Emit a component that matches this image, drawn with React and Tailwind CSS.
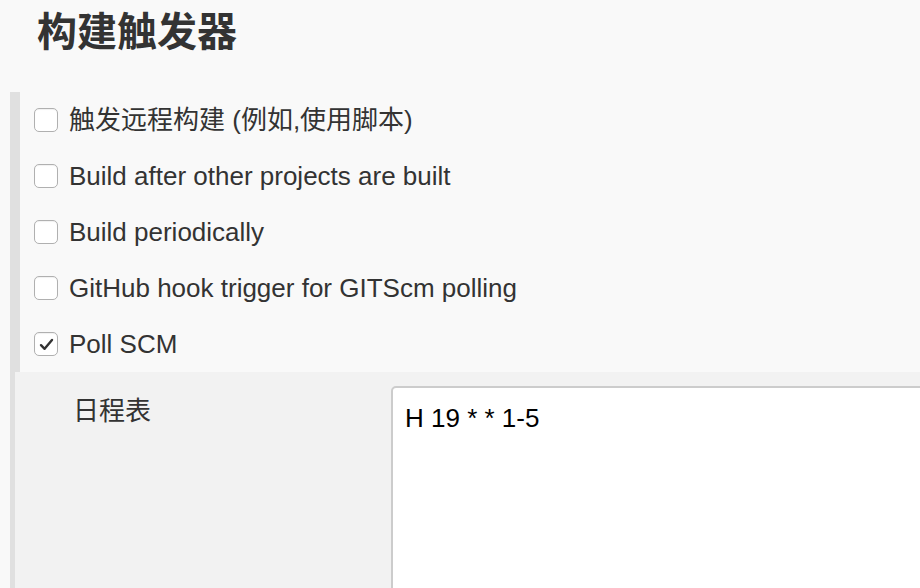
import React from "react";

const font = { fontFamily: '"Liberation Sans", "Noto Sans CJK SC", sans-serif' };

function Box({ checked }) {
  return (
    <span className="flex h-[24px] w-[24px] shrink-0 items-center justify-center rounded-[5px] border border-[#b0b0b0] bg-white shadow-[inset_0_1px_1px_rgba(0,0,0,0.06)]">
      {checked && (
        <svg width="15" height="13" viewBox="0 0 15 13" fill="none">
          <path d="M2 7.2 L5.6 10.8 L13 2" stroke="#333" strokeWidth="2.4" strokeLinecap="round" strokeLinejoin="round" />
        </svg>
      )}
    </span>
  );
}

function Row({ label, checked }) {
  return (
    <label className="flex h-[56px] items-center gap-[11px] pl-[14px] text-[26px] text-[#333]">
      <Box checked={checked} />
      <span className="leading-none">{label}</span>
    </label>
  );
}

export default function App() {
  const rows = [
    "触发远程构建 (例如,使用脚本)",
    "Build after other projects are built",
    "Build periodically",
    "GitHub hook trigger for GITScm polling",
  ];

  return (
    <div className="h-[588px] w-[920px] overflow-hidden bg-[#f9f9f9]" style={font}>
      <h1 className="h-[92px] pl-[37px] pt-[10px] text-[40px] font-bold leading-[44px] text-[#333]">
        构建触发器
      </h1>
      <div className="ml-[10px] h-[496px] border-l-[10px] border-[#e0e0e0]">
        {rows.map((r) => (
          <Row key={r} label={r} />
        ))}
        <Row label="Poll SCM" checked />
        <div className="-ml-[5px] flex h-[216px] bg-[#f2f2f2] pt-[14px]">
          <div className="w-[376px] shrink-0 pl-[58px] pt-[12px] text-[26px] leading-none text-[#333]">
            日程表
          </div>
          <div className="h-[240px] flex-1 -mr-[20px] rounded-[5px] border-2 border-[#cccccc] bg-white px-[12px] pt-[17px] text-[26px] leading-none text-black">
            H 19 * * 1-5
          </div>
        </div>
      </div>
    </div>
  );
}
